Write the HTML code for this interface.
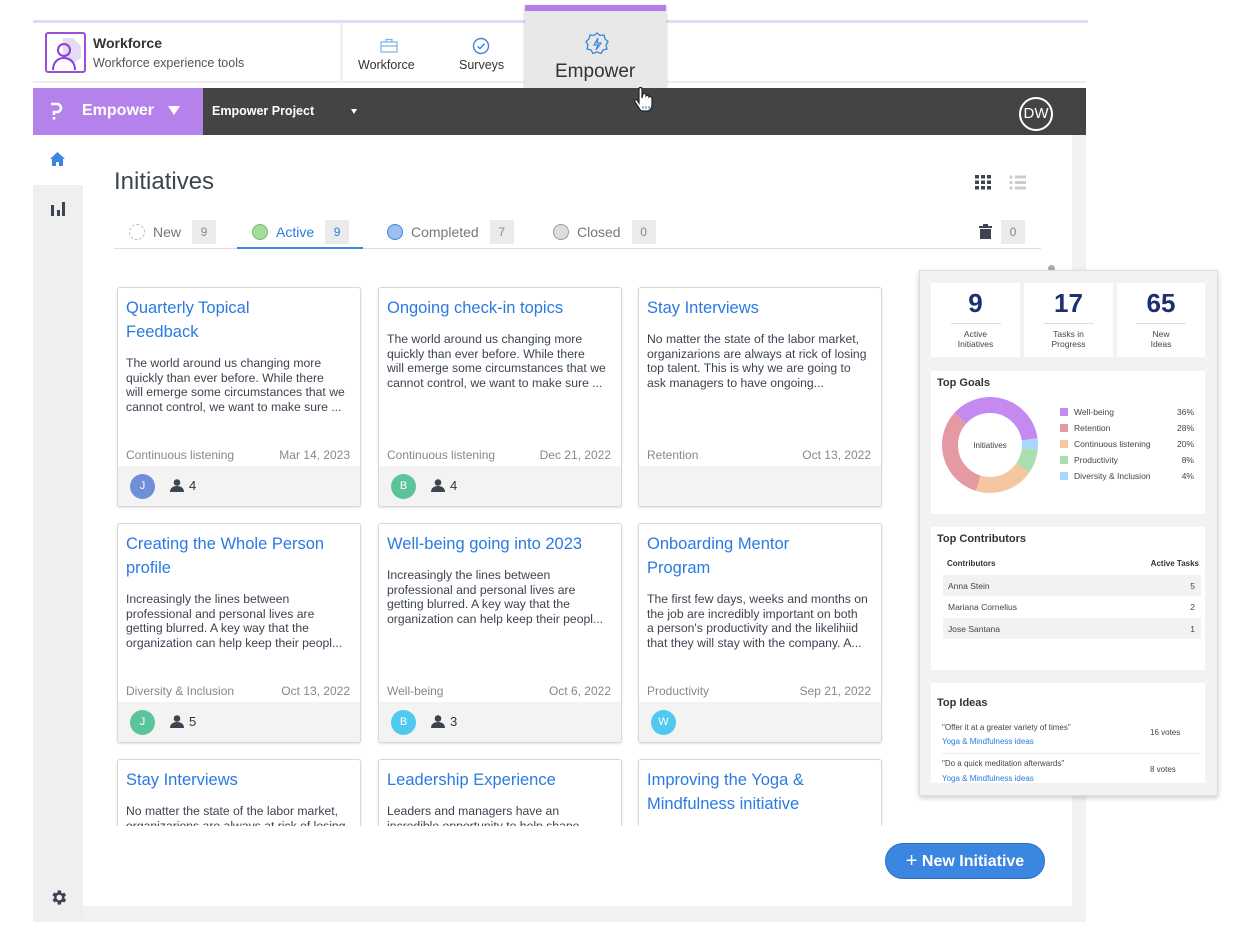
<!DOCTYPE html>
<html><head><meta charset="utf-8">
<style>
*{box-sizing:border-box;margin:0;padding:0}
body{width:1250px;height:938px;background:#fff;font-family:"Liberation Sans",sans-serif;position:relative;overflow:hidden;color:#3c4450}
.abs{position:absolute}
.card{position:absolute;width:244px;height:220px;border:1px solid #d8d8d8;border-radius:3px;background:#fff;box-shadow:0 1px 2px rgba(0,0,0,.12);overflow:hidden}
.card h3{position:absolute;left:8px;top:8px;right:8px;font-weight:normal;font-size:16.5px;line-height:24px;color:#2a7ae2;white-space:nowrap}
.card p{position:absolute;left:8px;right:4px;font-size:12.2px;line-height:14.6px;color:#3c4450;white-space:nowrap}
.card .meta{position:absolute;left:8px;right:10px;top:160px;font-size:12px;color:#888;display:flex;justify-content:space-between}
.card .ft{position:absolute;left:0;right:0;top:178px;height:42px;background:#f3f3f3}
.av{position:absolute;left:12px;top:8px;width:25px;height:25px;border-radius:50%;color:#fff;font-size:11px;text-align:center;line-height:25px}
.ppl{position:absolute;left:52px;top:12px;font-size:13px;color:#333;display:flex;align-items:center;gap:5px}
.tab{position:absolute;top:220px;height:24px;display:flex;align-items:center;font-size:14px;color:#777}
.dot{width:16px;height:16px;border-radius:50%;margin-right:8px}
.cnt{display:inline-block;width:24px;height:24px;background:#ebebeb;color:#888;font-size:12px;text-align:center;line-height:24px;margin-left:11px}
.box{position:absolute;background:#fff}
.sm{font-size:8.5px;color:#444}
</style></head><body>

<div class="abs" style="left:33px;top:20px;width:1055px;height:3px;background:#e6d8f7"></div>
<div class="abs" style="left:33px;top:23px;width:1053px;height:60px;background:#fff;border-bottom:2px solid #eee"></div>
<div class="abs" style="left:340px;top:23px;width:3px;height:60px;background:#f2f2f2"></div>
<div class="abs" style="left:45px;top:32px;width:41px;height:41px;border:2px solid #9b4fd8;border-radius:3px;background:#fff;overflow:hidden">
<svg width="37" height="37" viewBox="0 0 37 37"><path d="M16 4l10-0 8 8v12l-8 6-10-6z" fill="#e4dcf3"/><circle cx="17" cy="16" r="6" fill="none" stroke="#8e3fd6" stroke-width="2"/><path d="M6 36c0-8 5-12 11-12s11 4 11 12" fill="none" stroke="#8e3fd6" stroke-width="2"/></svg></div>
<div class="abs" style="left:93px;top:35px;font-size:14px;font-weight:bold;color:#333">Workforce</div>
<div class="abs" style="left:93px;top:56px;font-size:12.5px;color:#555">Workforce experience tools</div>
<svg class="abs" style="left:380px;top:38px" width="18" height="15" viewBox="0 0 18 15"><rect x="1" y="4" width="16" height="10" fill="none" stroke="#7eb0ea" stroke-width="1.2"/><path d="M6 4V1.5h6V4M1 8h16" fill="none" stroke="#7eb0ea" stroke-width="1.2"/></svg>
<div class="abs" style="left:358px;top:58px;font-size:12.5px;color:#333">Workforce</div>
<svg class="abs" style="left:472px;top:37px" width="18" height="18" viewBox="0 0 18 18"><circle cx="9" cy="9" r="7.5" fill="none" stroke="#3b86e0" stroke-width="1.4"/><path d="M5.5 9.2l2.4 2.4 4.6-5" fill="none" stroke="#3b86e0" stroke-width="1.4"/></svg>
<div class="abs" style="left:459px;top:58px;font-size:12.5px;color:#333">Surveys</div>
<div class="abs" style="left:525px;top:5px;width:141px;height:93px;background:#e8e8e8;border-top:6px solid #b47de8;box-shadow:0 1px 3px rgba(0,0,0,.25)"></div>
<svg class="abs" style="left:584px;top:31px" width="26" height="26" viewBox="0 0 26 26"><path d="M13 2l3 2.5 4-.5 1 4 3 2.5-2 3.5 1 4-4 1-2 3.5-4-1.5-4 1.5-2-3.5-4-1 1-4-2-3.5 3-2.5 1-4 4 .5z" fill="none" stroke="#3b86e0" stroke-width="1.3"/><path d="M14 7l-4 7h4l-2 5 5-7h-4z" fill="none" stroke="#3b86e0" stroke-width="1.2"/></svg>
<div class="abs" style="left:555px;top:61px;font-size:19px;color:#333">Empower</div>
<div class="abs" style="left:33px;top:88px;width:1053px;height:47px;background:#444"></div>
<div class="abs" style="left:33px;top:88px;width:170px;height:47px;background:#b482ea"></div>
<svg class="abs" style="left:49px;top:101px" width="14" height="20" viewBox="0 0 14 20"><path d="M2 3h6a4 4 0 010 8H5v3" fill="none" stroke="#fff" stroke-width="2.6"/><rect x="3.7" y="16" width="2.6" height="2.6" fill="#fff"/></svg>
<div class="abs" style="left:82px;top:102px;font-size:16px;font-weight:bold;color:#fff">Empower</div>
<div class="abs" style="left:168px;top:106px;width:0;height:0;border-left:6px solid transparent;border-right:6px solid transparent;border-top:9px solid #fff"></div>
<div class="abs" style="left:212px;top:104px;font-size:12.5px;font-weight:bold;color:#fff">Empower Project</div>
<div class="abs" style="left:351px;top:109px;width:0;height:0;border-left:3.5px solid transparent;border-right:3.5px solid transparent;border-top:5px solid #fff"></div>
<div class="abs" style="left:1019px;top:97px;width:34px;height:34px;border:2px solid #fff;border-radius:50%;color:#fff;font-size:15px;text-align:center;line-height:30px">DW</div>
<svg class="abs" style="left:632px;top:86px" width="24" height="28" viewBox="0 0 24 28"><path d="M7 3c0-2 3-2 3 0v9l1-4c1-1 3-1 3 1v1c1-1 3-1 3 1 1-1 3 0 3 1v7c0 3-2 6-5 6h-4c-2 0-3-1-4-3l-4-6c-1-2 1-3 2-2l2 3z" fill="#fff" stroke="#222" stroke-width="1.2"/><path d="M11 20v3M14 20v3M17 20v3" stroke="#2a7ae2" stroke-width="1"/></svg>

<div class="abs" style="left:33px;top:185px;width:50px;height:737px;background:#efefef"></div>
<svg class="abs" style="left:49px;top:151px" width="17" height="16" viewBox="0 0 17 16"><path d="M8.5 1L1 8h2v7h4v-4h3v4h4V8h2z" fill="#3b86e0"/></svg>
<svg class="abs" style="left:49px;top:199px" width="18" height="18" viewBox="0 0 18 18"><rect x="2" y="6" width="3" height="11" fill="#3c4450"/><rect x="8" y="11" width="3" height="6" fill="#3c4450"/><rect x="13" y="3" width="3" height="14" fill="#3c4450"/></svg>
<svg class="abs" style="left:49px;top:888px" width="19" height="19" viewBox="0 0 24 24"><path fill="#3c4450" d="M19.4 13a7.5 7.5 0 000-2l2.1-1.6-2-3.5-2.5 1a7 7 0 00-1.7-1L15 3h-4l-.4 2.7a7 7 0 00-1.7 1l-2.5-1-2 3.5L6.6 11a7.5 7.5 0 000 2l-2.1 1.6 2 3.5 2.5-1a7 7 0 001.7 1L11 21h4l.4-2.7a7 7 0 001.7-1l2.5 1 2-3.5zM13 15.5a3.5 3.5 0 110-7 3.5 3.5 0 010 7z"/></svg>
<div class="abs" style="left:1072px;top:135px;width:14px;height:787px;background:#f2f2f2"></div>
<div class="abs" style="left:83px;top:906px;width:1003px;height:16px;background:#f2f2f2"></div>

<div class="abs" style="left:114px;top:168px;font-size:24px;color:#3c4450">Initiatives</div>
<svg class="abs" style="left:975px;top:175px" width="17" height="15" viewBox="0 0 17 15"><g fill="#3c4450"><rect x="0" y="0" width="4" height="3.5"/><rect x="6" y="0" width="4" height="3.5"/><rect x="12" y="0" width="4" height="3.5"/><rect x="0" y="5.5" width="4" height="3.5"/><rect x="6" y="5.5" width="4" height="3.5"/><rect x="12" y="5.5" width="4" height="3.5"/><rect x="0" y="11" width="4" height="3.5"/><rect x="6" y="11" width="4" height="3.5"/><rect x="12" y="11" width="4" height="3.5"/></g></svg>
<svg class="abs" style="left:1009px;top:175px" width="18" height="15" viewBox="0 0 18 15"><g fill="#ccc"><circle cx="2" cy="2" r="1.6"/><circle cx="2" cy="7.5" r="1.6"/><circle cx="2" cy="13" r="1.6"/><rect x="6" y="0.5" width="11" height="3"/><rect x="6" y="6" width="11" height="3"/><rect x="6" y="11.5" width="11" height="3"/></g></svg>

<div class="tab" style="left:129px"><div class="dot" style="border:1px dashed #bbb"></div>New<span class="cnt">9</span></div>
<div class="tab" style="left:252px;color:#2a7ae2"><div class="dot" style="background:#a6dca0;border:1px solid #6bbf64"></div>Active<span class="cnt" style="color:#2a7ae2">9</span></div>
<div class="tab" style="left:387px"><div class="dot" style="background:#9dbff0;border:1px solid #3b86e0"></div>Completed<span class="cnt">7</span></div>
<div class="tab" style="left:553px"><div class="dot" style="background:#ddd;border:1px solid #999"></div>Closed<span class="cnt">0</span></div>
<svg class="abs" style="left:979px;top:224px" width="13" height="15" viewBox="0 0 13 15"><rect x="0" y="2" width="13" height="2" fill="#3c4450"/><rect x="4" y="0" width="5" height="2" fill="#3c4450"/><rect x="1" y="5" width="11" height="10" fill="#3c4450"/></svg>
<div class="abs" style="left:1001px;top:220px;width:24px;height:24px;background:#ebebeb;color:#888;font-size:12px;text-align:center;line-height:24px">0</div>
<div class="abs" style="left:114px;top:248px;width:927px;height:1px;background:#ddd"></div>
<div class="abs" style="left:237px;top:247px;width:126px;height:2px;background:#3b86e0"></div>

<div class="card" style="left:117px;top:287px"><h3>Quarterly Topical<br>Feedback</h3><p style="top:68px">The world around us changing more<br>quickly than ever before. While there<br>will emerge some circumstances that we<br>cannot control, we want to make sure ...</p><div class="meta"><span>Continuous listening</span><span>Mar 14, 2023</span></div><div class="ft"><div class="av" style="background:#6f8fd6">J</div><div class="ppl"><svg width="14" height="13" viewBox="0 0 14 13"><circle cx="7" cy="3.5" r="3.3" fill="#3c4450"/><path d="M0 13c0-4 3-6 7-6s7 2 7 6z" fill="#3c4450"/></svg>4</div></div></div>
<div class="card" style="left:378px;top:287px"><h3>Ongoing check-in topics</h3><p style="top:44px">The world around us changing more<br>quickly than ever before. While there<br>will emerge some circumstances that we<br>cannot control, we want to make sure ...</p><div class="meta"><span>Continuous listening</span><span>Dec 21, 2022</span></div><div class="ft"><div class="av" style="background:#5cc49a">B</div><div class="ppl"><svg width="14" height="13" viewBox="0 0 14 13"><circle cx="7" cy="3.5" r="3.3" fill="#3c4450"/><path d="M0 13c0-4 3-6 7-6s7 2 7 6z" fill="#3c4450"/></svg>4</div></div></div>
<div class="card" style="left:638px;top:287px"><h3>Stay Interviews</h3><p style="top:44px">No matter the state of the labor market,<br>organizarions are always at rick of losing<br>top talent. This is why we are going to<br>ask managers to have ongoing...</p><div class="meta"><span>Retention</span><span>Oct 13, 2022</span></div><div class="ft"></div></div>

<div class="card" style="left:117px;top:523px"><h3>Creating the Whole Person<br>profile</h3><p style="top:68px">Increasingly the lines between<br>professional and personal lives are<br>getting blurred. A key way that the<br>organization can help keep their peopl...</p><div class="meta"><span>Diversity &amp; Inclusion</span><span>Oct 13, 2022</span></div><div class="ft"><div class="av" style="background:#5cc49a">J</div><div class="ppl"><svg width="14" height="13" viewBox="0 0 14 13"><circle cx="7" cy="3.5" r="3.3" fill="#3c4450"/><path d="M0 13c0-4 3-6 7-6s7 2 7 6z" fill="#3c4450"/></svg>5</div></div></div>
<div class="card" style="left:378px;top:523px"><h3>Well-being going into 2023</h3><p style="top:44px">Increasingly the lines between<br>professional and personal lives are<br>getting blurred. A key way that the<br>organization can help keep their peopl...</p><div class="meta"><span>Well-being</span><span>Oct 6, 2022</span></div><div class="ft"><div class="av" style="background:#4fc9ee">B</div><div class="ppl"><svg width="14" height="13" viewBox="0 0 14 13"><circle cx="7" cy="3.5" r="3.3" fill="#3c4450"/><path d="M0 13c0-4 3-6 7-6s7 2 7 6z" fill="#3c4450"/></svg>3</div></div></div>
<div class="card" style="left:638px;top:523px"><h3>Onboarding Mentor<br>Program</h3><p style="top:68px">The first few days, weeks and months on<br>the job are incredibly important on both<br>a person's productivity and the likelihiid<br>that they will stay with the company. A...</p><div class="meta"><span>Productivity</span><span>Sep 21, 2022</span></div><div class="ft"><div class="av" style="background:#4fc9ee">W</div></div></div>

<div class="abs" style="left:100px;top:758px;width:800px;height:68px;overflow:hidden">
<div class="card" style="left:17px;top:1px"><h3>Stay Interviews</h3><p style="top:44px">No matter the state of the labor market,<br>organizarions are always at rick of losing</p></div>
<div class="card" style="left:278px;top:1px"><h3>Leadership Experience</h3><p style="top:44px">Leaders and managers have an<br>incredible opportunity to help shape</p></div>
<div class="card" style="left:538px;top:1px"><h3>Improving the Yoga &amp;<br>Mindfulness initiative</h3></div>
</div>

<div class="abs" style="left:885px;top:843px;width:160px;height:36px;border-radius:18px;background:#3b86e0;border:1px solid #2a6fc4;color:#fff;font-size:16px;font-weight:bold;line-height:34px;text-align:center"><span style="font-size:20px;font-weight:normal;vertical-align:-1px">+</span> New Initiative</div>

<div class="abs" style="left:1048px;top:265px;width:7px;height:7px;border-radius:50%;background:#aaa"></div>

<div class="abs" style="left:919px;top:270px;width:299px;height:526px;background:#f2f2f2;border:1px solid #ddd;box-shadow:0 2px 5px rgba(0,0,0,.2)"></div>
<div class="box" style="left:931px;top:283px;width:89px;height:74px;text-align:center"><div style="font-size:26px;font-weight:bold;color:#1d2f6f;margin-top:5px">9</div><div style="width:50px;height:1px;background:#ddd;margin:4px auto 5px"></div><div class="sm" style="line-height:10px">Active<br>Initiatives</div></div>
<div class="box" style="left:1024px;top:283px;width:89px;height:74px;text-align:center"><div style="font-size:26px;font-weight:bold;color:#1d2f6f;margin-top:5px">17</div><div style="width:50px;height:1px;background:#ddd;margin:4px auto 5px"></div><div class="sm" style="line-height:10px">Tasks in<br>Progress</div></div>
<div class="box" style="left:1117px;top:283px;width:88px;height:74px;text-align:center"><div style="font-size:26px;font-weight:bold;color:#1d2f6f;margin-top:5px">65</div><div style="width:50px;height:1px;background:#ddd;margin:4px auto 5px"></div><div class="sm" style="line-height:10px">New<br>Ideas</div></div>

<div class="box" style="left:931px;top:371px;width:274px;height:143px">
<div style="position:absolute;left:6px;top:6px;font-size:11px;font-weight:bold;color:#333">Top Goals</div>
<svg style="position:absolute;left:10px;top:25px" width="98" height="98" viewBox="0 0 98 98">
<g transform="rotate(-138 49 49)" fill="none" stroke-width="16">
<circle cx="49" cy="49" r="40" stroke="#c48af0" stroke-dasharray="90.5 161" stroke-dashoffset="0"/>
<circle cx="49" cy="49" r="40" stroke="#a9d7fb" stroke-dasharray="10 241.3" stroke-dashoffset="-90.5"/>
<circle cx="49" cy="49" r="40" stroke="#a8deb0" stroke-dasharray="20 231.3" stroke-dashoffset="-100.5"/>
<circle cx="49" cy="49" r="40" stroke="#f5c7a1" stroke-dasharray="50.3 201" stroke-dashoffset="-120.5"/>
<circle cx="49" cy="49" r="40" stroke="#e59aa3" stroke-dasharray="80.5 170.8" stroke-dashoffset="-170.8"/>
</g>
<text x="49" y="52" text-anchor="middle" font-size="8" fill="#444" font-family="Liberation Sans">Initiatives</text></svg>
<div class="sm" style="position:absolute;left:129px;top:33px;width:134px;line-height:16px">
<div style="display:flex;align-items:center"><i style="width:8px;height:8px;background:#c48af0;margin-right:6px"></i><span style="flex:1">Well-being</span>36%</div>
<div style="display:flex;align-items:center"><i style="width:8px;height:8px;background:#e59aa3;margin-right:6px"></i><span style="flex:1">Retention</span>28%</div>
<div style="display:flex;align-items:center"><i style="width:8px;height:8px;background:#f5c7a1;margin-right:6px"></i><span style="flex:1">Continuous listening</span>20%</div>
<div style="display:flex;align-items:center"><i style="width:8px;height:8px;background:#a8deb0;margin-right:6px"></i><span style="flex:1">Productivity</span>8%</div>
<div style="display:flex;align-items:center"><i style="width:8px;height:8px;background:#a9d7fb;margin-right:6px"></i><span style="flex:1">Diversity &amp; Inclusion</span>4%</div>
</div></div>

<div class="box" style="left:931px;top:527px;width:274px;height:143px">
<div style="position:absolute;left:6px;top:6px;font-size:11px;font-weight:bold;color:#333">Top Contributors</div>
<div class="sm" style="position:absolute;left:16px;top:32px;width:252px;display:flex;justify-content:space-between;font-weight:bold;color:#333;font-size:8px"><span>Contributors</span><span>Active Tasks</span></div>
<div class="sm" style="position:absolute;left:12px;top:48px;width:258px;height:21px;background:#f2f2f2;display:flex;justify-content:space-between;align-items:center;padding:0 6px 0 5px"><span>Anna Stein</span><span>5</span></div>
<div class="sm" style="position:absolute;left:12px;top:69px;width:258px;height:22px;display:flex;justify-content:space-between;align-items:center;padding:0 6px 0 5px"><span>Mariana Cornelius</span><span>2</span></div>
<div class="sm" style="position:absolute;left:12px;top:91px;width:258px;height:21px;background:#f2f2f2;display:flex;justify-content:space-between;align-items:center;padding:0 6px 0 5px"><span>Jose Santana</span><span>1</span></div>
</div>

<div class="box" style="left:931px;top:683px;width:274px;height:100px;overflow:hidden">
<div style="position:absolute;left:6px;top:14px;font-size:11px;font-weight:bold;color:#333">Top Ideas</div>
<div class="sm" style="position:absolute;left:11px;top:40px;font-size:8px">"Offer it at a greater variety of times"</div>
<div class="sm" style="position:absolute;left:11px;top:54px;font-size:8px;color:#2a7ae2">Yoga &amp; Mindfulness ideas</div>
<div class="sm" style="position:absolute;left:219px;top:45px;font-size:8px">16 votes</div>
<div style="position:absolute;left:11px;top:70px;width:258px;height:1px;background:#eee"></div>
<div class="sm" style="position:absolute;left:11px;top:76px;font-size:8px">"Do a quick meditation afterwards"</div>
<div class="sm" style="position:absolute;left:11px;top:91px;font-size:8px;color:#2a7ae2">Yoga &amp; Mindfulness ideas</div>
<div class="sm" style="position:absolute;left:219px;top:82px;font-size:8px">8 votes</div>
</div>

</body></html>
